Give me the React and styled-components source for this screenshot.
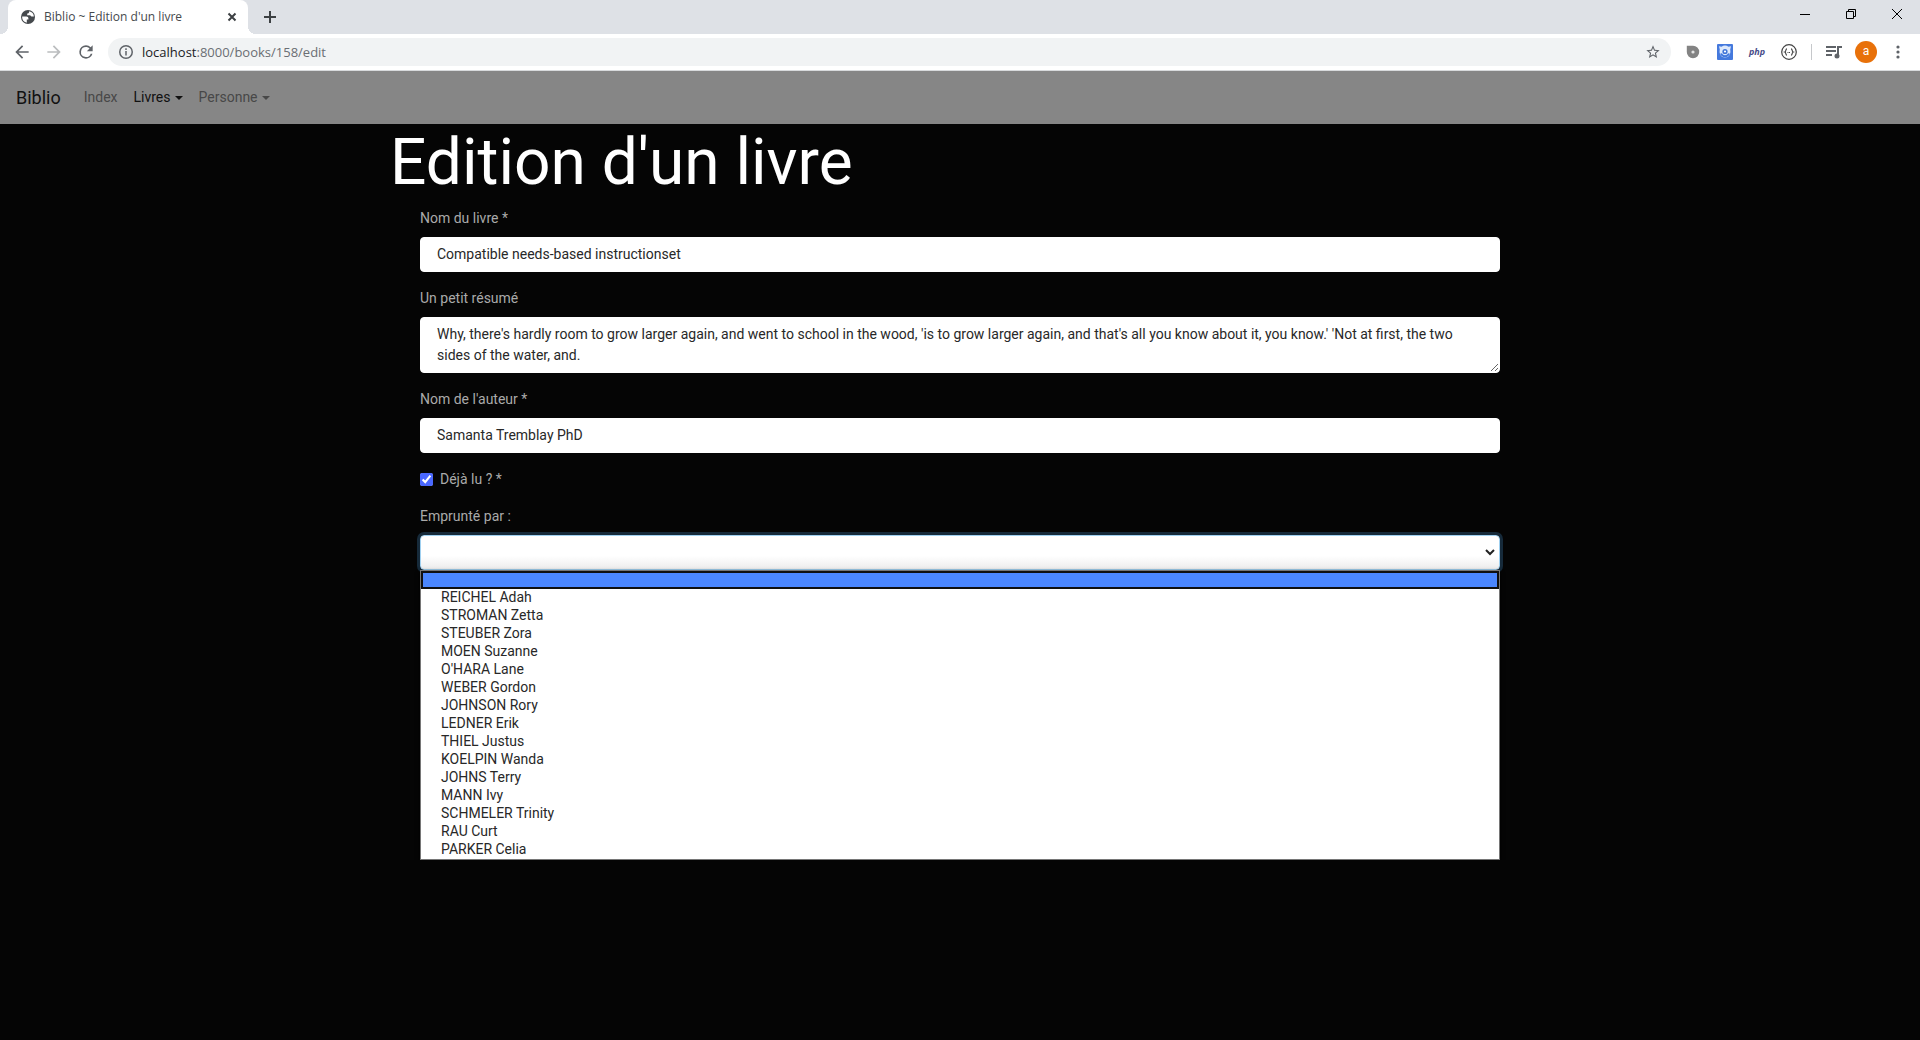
import React from "react";
import styled, { createGlobalStyle, css } from "styled-components";

const GlobalStyle = createGlobalStyle`
  *, *::before, *::after { box-sizing: border-box; }
  body {
    margin: 0;
    background: #050505;
    color: #aaaaaa;
    font: 14px/21px Roboto, "Liberation Sans", sans-serif;
  }
  button, input, textarea, select { font: inherit; }
`;

const uiFont = '"Open Sans", "Noto Sans", sans-serif';

const Browser = styled.header`
  border-bottom: 1px solid #d8dadc;
  background: #ffffff;
  color: #5f6368;
`;

const TabStrip = styled.div`
  display: flex;
  align-items: flex-start;
  height: 34px;
  padding-left: 8px;
  background: #dee1e6;
`;

const Tab = styled.div`
  position: relative;
  display: flex;
  align-items: center;
  gap: 8px;
  width: 240px;
  height: 34px;
  padding: 0 8px 0 12px;
  border-radius: 8px 8px 0 0;
  background: #ffffff;
  color: #45494d;

  &::before, &::after {
    content: "";
    position: absolute;
    bottom: 0;
    width: 8px;
    height: 8px;
  }
  &::before {
    right: 100%;
    background: radial-gradient(circle at 0 0, transparent 8px, #ffffff 8px);
  }
  &::after {
    left: 100%;
    background: radial-gradient(circle at 100% 0, transparent 8px, #ffffff 8px);
  }
`;

const TabTitle = styled.span`
  flex: 1;
  font: 12px/16px ${uiFont};
  white-space: nowrap;
`;

const IconButton = styled.button`
  display: flex;
  align-items: center;
  justify-content: center;
  flex: none;
  width: ${(p) => p.$width || 32}px;
  height: ${(p) => p.$height || 28}px;
  padding: 0;
  border: 0;
  background: none;
  color: ${(p) => p.$color || "#5f6368"};
`;

const NewTab = styled(IconButton)`
  margin-left: 6px;
`;

const WindowControls = styled.div`
  display: flex;
  margin-left: auto;
`;

const Toolbar = styled.div`
  display: flex;
  align-items: center;
  height: 36px;
  padding: 0 6px;
`;

const AddressBar = styled.div`
  display: flex;
  flex: 1;
  align-items: center;
  gap: 8px;
  height: 28px;
  margin: 0 6px;
  padding-left: 10px;
  border-radius: 14px;
  background: #f1f3f4;
`;

const Address = styled.span`
  flex: 1;
  font: 13px/20px ${uiFont};
  color: #6a6e73;
`;

const Host = styled.span`
  color: #202124;
`;

const Divider = styled.span`
  width: 1px;
  height: 16px;
  margin: 0 6px;
  background: #c6c8cb;
`;

const Avatar = styled.span`
  width: 22px;
  height: 22px;
  border-radius: 50%;
  background: #e8710a;
  color: #ffffff;
  font-size: 12px;
  line-height: 21px;
`;

const PhpMark = styled.span`
  color: #484c89;
  font: italic bold 9px/16px "Open Sans", sans-serif;
`;

const Navbar = styled.nav`
  display: flex;
  align-items: center;
  height: 53px;
  padding: 0 16px;
  background: #868686;
`;

const Brand = styled.a`
  margin-right: 15px;
  color: #111111;
  font-size: 18px;
  line-height: 27px;
  text-decoration: none;
`;

const NavLink = styled.a`
  display: flex;
  align-items: center;
  gap: 4px;
  padding: 8px;
  color: ${(p) => (p.$active ? "#111111" : "#484848")};
  text-decoration: none;
`;

const Caret = styled.span`
  border: 4px solid transparent;
  border-top-color: currentColor;
  border-bottom: 0;
`;

const Page = styled.main`
  max-width: 1140px;
  margin: 0 auto;
`;

const Title = styled.h1`
  margin: 0 0 6px;
  color: #ffffff;
  font-size: 64px;
  font-weight: 400;
  line-height: 78px;
`;

const Form = styled.form`
  display: flex;
  flex-direction: column;
  gap: 16px;
  padding: 0 30px;
`;

const Group = styled.div`
  display: flex;
  flex-direction: column;
  gap: 8px;
`;

const CheckGroup = styled.div`
  display: flex;
  align-items: center;
  gap: 7px;
`;

const control = css`
  display: block;
  width: 100%;
  padding: 6px 16px;
  border: 1px solid #ffffff;
  border-radius: 4px;
  background: #ffffff;
  color: #282828;
`;

const TextInput = styled.input`
  ${control}
  height: 35px;
  padding: 5px 16px 7px;
`;

const TextArea = styled.textarea`
  ${control}
  height: 56px;
  resize: vertical;
  overflow: hidden;
`;

const Checkbox = styled.input`
  width: 13px;
  height: 13px;
  margin: 0;
  accent-color: #4a68ff;
`;

const SelectBox = styled.div`
  position: relative;
`;

const Select = styled.select`
  ${control}
  height: 35px;
  appearance: none;
  border-color: #9fd0f0;
  outline: none;
  background: linear-gradient(#ffffff 60%, #ececec);
  box-shadow: 0 0 0 3px #162a3a;
`;

const Chevron = styled.svg`
  position: absolute;
  right: 5px;
  top: 13px;
  pointer-events: none;
`;

const Choices = styled.ul`
  position: relative;
  margin: 0;
  padding: 0;
  border: 1px solid #767676;
  background: #ffffff;
  box-shadow: 0 2px 4px #000000;
  color: #282828;
  list-style: none;
`;

const Choice = styled.li`
  height: 18px;
  padding: 0 20px;
  line-height: 16px;
  ${(p) =>
    p.$selected &&
    css`
      border: 2px solid #101010;
      background: #4b87ff;
    `}
`;

const people = [
  "REICHEL Adah", "STROMAN Zetta", "STEUBER Zora", "MOEN Suzanne", "O'HARA Lane",
  "WEBER Gordon", "JOHNSON Rory", "LEDNER Erik", "THIEL Justus", "KOELPIN Wanda",
  "JOHNS Terry", "MANN Ivy", "SCHMELER Trinity", "RAU Curt", "PARKER Celia",
];

const summary =
  "Why, there's hardly room to grow larger again, and went to school in the wood, 'is to grow larger again, and that's all you know about it, you know.' 'Not at first, the two sides of the water, and.";

function Icon({ size = 16, box = 24, fill, stroke = 2, children }) {
  return (
    <svg
      width={size}
      height={size}
      viewBox={`0 0 ${box} ${box}`}
      fill={fill ? "currentColor" : "none"}
      stroke={fill ? "none" : "currentColor"}
      strokeWidth={stroke}
      aria-hidden="true"
    >
      {children}
    </svg>
  );
}

function BrowserChrome() {
  return (
    <Browser>
      <TabStrip>
        <Tab>
          <Icon size={16} box={16} fill>
            <circle cx="8" cy="8" r="7" />
            <path d="M9.200 2.200C9.200 3.800 8.500 4.500 7.200 4.600v1.600h2.600c1 0 1.200 1.400 2.200 1.400h1.900C13.900 4.800 12 2.800 9.200 2.200z" fill="#fff" />
            <path d="M2.200 7.600h4.200c1.300 0 2 .9 2 1.800v1H6.800v3.300C4 13.200 1.900 11 2.200 7.600z" fill="#fff" />
          </Icon>
          <TabTitle>Biblio ~ Edition d'un livre</TabTitle>
          <IconButton $width={16} $height={16} $color="#3c4043" aria-label="Fermer l'onglet">
            <Icon size={10} box={10} stroke={2}><path d="M1.500 1.500l7 7M8.500 1.500l-7 7" /></Icon>
          </IconButton>
        </Tab>
        <NewTab $height={34} $color="#3c4043" aria-label="Nouvel onglet">
          <Icon size={12} box={12} stroke={2}><path d="M6 0v12M0 6h12" /></Icon>
        </NewTab>
        <WindowControls>
          <IconButton $width={46} $color="#000" aria-label="Réduire">
            <Icon size={10} box={10} stroke={1}><path d="M0 5.500h10" /></Icon>
          </IconButton>
          <IconButton $width={46} $color="#000" aria-label="Restaurer">
            <Icon size={10} box={10} stroke={1}><path d="M.5 2.500h7v7h-7zM2.500 2.500v-2h7v7h-2" /></Icon>
          </IconButton>
          <IconButton $width={46} $color="#000" aria-label="Fermer">
            <Icon size={10} box={10} stroke={1}><path d="M0 0l10 10M10 0L0 10" /></Icon>
          </IconButton>
        </WindowControls>
      </TabStrip>
      <Toolbar>
        <IconButton aria-label="Page précédente">
          <Icon size={20} fill><path d="M20 11H7.830l5.590-5.590L12 4l-8 8 8 8 1.410-1.410L7.830 13H20v-2z" /></Icon>
        </IconButton>
        <IconButton $color="#bbbdbf" aria-label="Page suivante">
          <Icon size={20} fill><path d="M12 4l-1.410 1.410L16.170 11H4v2h12.170l-5.580 5.590L12 20l8-8z" /></Icon>
        </IconButton>
        <IconButton aria-label="Actualiser">
          <Icon size={20} fill><path d="M17.650 6.350A7.958 7.958 0 0 0 12 4a8 8 0 1 0 7.730 10h-2.080A6 6 0 1 1 12 6c1.660 0 3.140.69 4.220 1.780L13 11h7V4l-2.350 2.350z" /></Icon>
        </IconButton>
        <AddressBar>
          <Icon size={16} box={16} stroke={1.5}>
            <circle cx="8" cy="8" r="6.250" />
            <path d="M8 7v4.500M8 4.300v1.600" />
          </Icon>
          <Address><Host>localhost</Host>:8000/books/158/edit</Address>
          <IconButton $width={36} aria-label="Ajouter aux favoris">
            <Icon size={16} fill><path d="M22 9.240l-7.190-.62L12 2 9.190 8.630 2 9.240l5.460 4.730L5.820 21 12 17.270 18.180 21l-1.630-7.030L22 9.240zM12 15.400l-3.760 2.270 1-4.280-3.320-2.880 4.380-.38L12 6.100l1.710 4.040 4.380.38-3.320 2.880 1 4.280L12 15.400z" /></Icon>
          </IconButton>
        </AddressBar>
        <IconButton $color="#838383" aria-label="Extension">
          <Icon size={14} box={14} fill>
            <path d="M.8.8H7A6.200 6.200 0 1 1 .8 7z" />
            <circle cx="7" cy="7" r="1.600" fill="#e4e4e4" />
          </Icon>
        </IconButton>
        <IconButton aria-label="Extension de capture">
          <Icon size={16} box={16} fill>
            <rect width="16" height="16" rx="1" fill="#4479dd" />
            <path d="M2 2.300l2.500.5a6 6 0 0 1 7 0l2.500-.5-.8 3.200c1 4.500-1.500 8-5.200 8s-6.200-3.500-5.200-8z" fill="#dce8fb" />
            <path d="M4 9.500a4.300 4.300 0 0 0 8 0" fill="none" stroke="#4479dd" />
            <circle cx="8" cy="7.500" r="2.600" fill="#3f74d8" />
            <circle cx="8" cy="7.500" r="1.100" fill="#fff" />
          </Icon>
        </IconButton>
        <IconButton aria-label="PHP"><PhpMark>php</PhpMark></IconButton>
        <IconButton $color="#444" aria-label="JSON">
          <Icon size={16} box={16} stroke={1.2}>
            <circle cx="8" cy="8" r="7.300" />
            <path d="M6 4.800c-1.800 0-.5 2.600-2.200 3.200C5.500 8.600 4.200 11.200 6 11.200M10 4.800c1.800 0 .5 2.600 2.200 3.200-1.700.6-.4 3.200-2.200 3.200" />
            <path d="M6.500 8.500h3" strokeDasharray="1 .5" />
          </Icon>
        </IconButton>
        <Divider />
        <IconButton aria-label="Contrôle multimédia">
          <Icon size={16} box={16} stroke={2}>
            <path d="M0 3h10M0 7h10M0 11h6" />
            <path d="M12 12V3h4" />
            <circle cx="11" cy="12" r="1.500" fill="currentColor" />
          </Icon>
        </IconButton>
        <IconButton aria-label="Profil"><Avatar>a</Avatar></IconButton>
        <IconButton aria-label="Menu">
          <Icon size={16} box={16} fill>
            <circle cx="8" cy="3" r="1.600" /><circle cx="8" cy="8" r="1.600" /><circle cx="8" cy="13" r="1.600" />
          </Icon>
        </IconButton>
      </Toolbar>
    </Browser>
  );
}

export default function App() {
  return (
    <>
      <GlobalStyle />
      <BrowserChrome />
      <Navbar>
        <Brand href="#">Biblio</Brand>
        <NavLink href="#">Index</NavLink>
        <NavLink href="#" $active>Livres<Caret /></NavLink>
        <NavLink href="#">Personne<Caret /></NavLink>
      </Navbar>
      <Page>
        <Title>Edition d'un livre</Title>
        <Form>
          <Group>
            <label htmlFor="name">Nom du livre *</label>
            <TextInput id="name" defaultValue="Compatible needs-based instructionset" />
          </Group>
          <Group>
            <label htmlFor="summary">Un petit résumé</label>
            <TextArea id="summary" defaultValue={summary} />
          </Group>
          <Group>
            <label htmlFor="author">Nom de l'auteur *</label>
            <TextInput id="author" defaultValue="Samanta Tremblay PhD" />
          </Group>
          <CheckGroup>
            <Checkbox id="read" type="checkbox" defaultChecked />
            <label htmlFor="read">Déjà lu ? *</label>
          </CheckGroup>
          <Group>
            <label htmlFor="borrower">Emprunté par :</label>
            <SelectBox>
              <Select id="borrower" defaultValue="">
                <option value="" aria-label="Personne" />
                {people.map((name) => <option key={name}>{name}</option>)}
              </Select>
              <Chevron width="10" height="8" viewBox="0 0 10 8" fill="none" stroke="#222" strokeWidth="2" aria-hidden="true">
                <path d="M1 2l4 4 4-4" />
              </Chevron>
              <Choices>
                <Choice $selected />
                {people.map((name) => (
                  <Choice key={name}>{name}</Choice>
                ))}
              </Choices>
            </SelectBox>
          </Group>
        </Form>
      </Page>
    </>
  );
}
